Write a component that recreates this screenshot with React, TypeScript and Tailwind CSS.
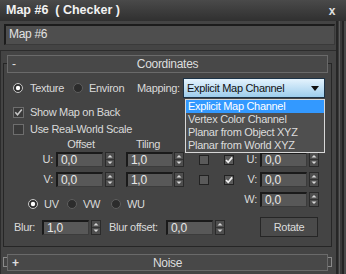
import React from "react";

const Spinner = () => (
  <svg width="10" height="15" viewBox="0 0 10 15" className="block shrink-0">
    <rect x="0.5" y="0.5" width="9" height="14" fill="#4e4e4e" stroke="#2a2a2a" />
    <line x1="1" y1="7.5" x2="9" y2="7.5" stroke="#333333" />
    <path d="M2.5 5.5 L5 3 L7.5 5.5 Z" fill="#d8d8d8" />
    <path d="M2.5 9.5 L5 12 L7.5 9.5 Z" fill="#d8d8d8" />
  </svg>
);

const Field = ({ value, className = "" }: { value: string; className?: string }) => (
  <div
    className={`h-[15px] shrink-0 bg-[#585858] border-t-2 border-l-2 border-r border-b border-t-[#1a1a1a] border-l-[#1a1a1a] border-r-[#3c3c3c] border-b-[#3c3c3c] pl-[3px] text-[12px] leading-[12px] text-[#e8e8e8] ${className}`}
  >
    {value}
  </div>
);

const Radio = ({ on }: { on?: boolean }) => (
  <svg width="10" height="10" viewBox="0 0 10 10" className="block shrink-0">
    <circle cx="5" cy="5" r="4.5" fill="#2c2c2c" stroke={on ? "#c8c8c8" : "#5e5e5e"} />
    {on && <circle cx="5" cy="5" r="2.2" fill="#ffffff" />}
  </svg>
);

const CheckA = ({ on }: { on?: boolean }) => (
  <div className="flex h-[11px] w-[11px] shrink-0 items-center justify-center border border-[#6e6e6e] bg-[#3a3a3a]">
    {on && (
      <svg width="9" height="9" viewBox="0 0 9 9" className="block">
        <path d="M1.3 4.3 L3.5 6.8 L7.8 1.6" stroke="#c8c8c8" strokeWidth="1.5" fill="none" />
      </svg>
    )}
  </div>
);

const CheckB = ({ on }: { on?: boolean }) => (
  <div className="flex h-[10px] w-[10px] shrink-0 items-center justify-center border border-[#222222] bg-[#5a5a5a]">
    {on && (
      <svg width="8" height="8" viewBox="0 0 8 8" className="block">
        <path d="M1 4 L3.2 6.3 L7.2 1.4" stroke="#f0f0f0" strokeWidth="1.7" fill="none" />
      </svg>
    )}
  </div>
);

const Label = ({ children, className = "" }: { children: React.ReactNode; className?: string }) => (
  <span className={`shrink-0 whitespace-nowrap text-[11px] leading-[13px] text-[#dadada] ${className}`}>{children}</span>
);

export default function App() {
  return (
    <div className="flex h-[274px] w-[346px] flex-col overflow-hidden bg-[#444444] font-['Liberation_Sans',Arial,sans-serif] tracking-[-0.3px]">
      {/* title bar */}
      <div className="flex h-[21px] shrink-0 items-center justify-between bg-gradient-to-b from-[#4a4a4a] to-[#303030] pl-[6px] pr-[11px]">
        <span className="whitespace-pre text-[12.5px] font-bold tracking-normal text-[#f2f2f2]">Map #6  ( Checker )</span>
        <span className="text-[12px] font-bold text-[#e0e0e0]">x</span>
      </div>

      <div className="flex flex-1">
        {/* main column */}
        <div className="flex w-[336px] shrink-0 flex-col">
          <div className="ml-[4px] mt-[3px] h-[21px] w-[331px] border-t-2 border-l-2 border-r border-b border-t-[#1c1c1c] border-l-[#1c1c1c] border-r-[#3a3a3a] border-b-[#3a3a3a] bg-[#4e4e4e] pl-[3px] text-[12px] leading-[17px] text-[#e2e2e2]">
            Map #6
          </div>

          {/* panel */}
          <div className="mt-[5px] flex-1 border-t border-l border-[#2c2c2c] pt-[4px]">
            {/* Coordinates rollout */}
            <div className="ml-[2px] w-[329px]">
              <div className="relative z-10 mx-[4px] flex h-[18px] items-center border border-[#6a6a6a] bg-[#484848] text-[12px] text-[#dedede]">
                <span className="ml-[4px] w-[10px]">-</span>
                <span className="flex-1 pr-[14px] text-center">Coordinates</span>
              </div>
              <div className="-mt-[10px] border border-[#262626] pb-[9px] pl-px pt-[14px]">
                {/* row 1 */}
                <div className="flex h-[20px] items-center pl-[8px]">
                  <Radio on />
                  <Label className="ml-[7px] w-[36px]">Texture</Label>
                  <div className="ml-[7px]">
                    <Radio />
                  </div>
                  <Label className="ml-[6px] w-[48px]">Environ</Label>
                  <Label className="w-[46px]">Mapping:</Label>
                  <div className="relative">
                    <div className="flex h-[20px] w-[142px] items-center justify-between border border-[#1d3347] bg-gradient-to-b from-[#e4f3fd] to-[#9dcdec] pl-[3px] pr-[5px]">
                      <span className="text-[11px] text-[#111111]">Explicit Map Channel</span>
                      <svg width="8" height="5" viewBox="0 0 8 5" className="block">
                        <path d="M0 0 L8 0 L4 5 Z" fill="#111111" />
                      </svg>
                    </div>
                    <div className="absolute left-[2px] top-[21px] z-20 w-[140px] border border-[#d8d8d8] bg-[#4f4f4f] text-[11px] leading-[13px] text-[#dcdcdc]">
                      <div className="h-[13px] bg-[#3399ff] pl-[2px] text-white">Explicit Map Channel</div>
                      <div className="h-[13px] pl-[2px]">Vertex Color Channel</div>
                      <div className="h-[13px] pl-[2px]">Planar from Object XYZ</div>
                      <div className="h-[13px] pl-[2px]">Planar from World XYZ</div>
                    </div>
                  </div>
                </div>

                {/* row 2 */}
                <div className="mt-[9px] flex h-[11px] items-center pl-[8px]">
                  <CheckA on />
                  <Label className="ml-[6px]">Show Map on Back</Label>
                </div>
                {/* row 3 */}
                <div className="mt-[6px] flex h-[11px] items-center pl-[8px]">
                  <CheckA />
                  <Label className="ml-[6px]">Use Real-World Scale</Label>
                </div>

                {/* section */}
                <div className="mt-[2px] flex">
                  <div className="flex w-[186px] shrink-0 flex-col">
                    <div className="flex h-[15px] items-center">
                      <Label className="ml-[51px] w-[50px] text-center">Offset</Label>
                      <Label className="ml-[17px] w-[50px] text-center">Tiling</Label>
                    </div>
                    <div className="flex h-[15px] items-center">
                      <Label className="w-[48px] text-right">U:</Label>
                      <Field value="0,0" className="ml-[3px] w-[47px]" />
                      <div className="ml-[2px]"><Spinner /></div>
                      <Field value="1,0" className="ml-[11px] w-[47px]" />
                      <div className="ml-px"><Spinner /></div>
                    </div>
                    <div className="mt-[5px] flex h-[15px] items-center">
                      <Label className="w-[48px] text-right">V:</Label>
                      <Field value="0,0" className="ml-[3px] w-[47px]" />
                      <div className="ml-[2px]"><Spinner /></div>
                      <Field value="1,0" className="ml-[11px] w-[47px]" />
                      <div className="ml-px"><Spinner /></div>
                    </div>
                    <div className="mt-[10px] flex h-[14px] items-center">
                      <div className="ml-[23px]"><Radio on /></div>
                      <Label className="ml-[6px] w-[23px]">UV</Label>
                      <Radio />
                      <Label className="ml-[6px] w-[28px]">VW</Label>
                      <Radio />
                      <Label className="ml-[6px]">WU</Label>
                    </div>
                  </div>
                  <div className="flex flex-col">
                    <div className="h-[15px]" />
                    <div className="flex h-[15px] items-center">
                      <div className="ml-[8px]"><CheckB /></div>
                      <div className="ml-[15px]"><CheckB on /></div>
                      <Label className="w-[23px] text-right">U:</Label>
                      <Field value="0,0" className="ml-[3px] w-[47px]" />
                      <div className="ml-[2px]"><Spinner /></div>
                    </div>
                    <div className="mt-[5px] flex h-[15px] items-center">
                      <div className="ml-[8px]"><CheckB /></div>
                      <div className="ml-[15px]"><CheckB on /></div>
                      <Label className="w-[23px] text-right">V:</Label>
                      <Field value="0,0" className="ml-[3px] w-[47px]" />
                      <div className="ml-[2px]"><Spinner /></div>
                    </div>
                    <div className="mt-[5px] flex h-[15px] items-center">
                      <Label className="ml-[43px] w-[23px] text-right">W:</Label>
                      <Field value="0,0" className="ml-[3px] w-[47px]" />
                      <div className="ml-[2px]"><Spinner /></div>
                    </div>
                  </div>
                </div>

                {/* blur row */}
                <div className="mt-[6px] flex h-[20px] items-center pl-[9px]">
                  <Label className="w-[28px]">Blur:</Label>
                  <Field value="1,0" className="w-[47px]" />
                  <div className="ml-[2px]"><Spinner /></div>
                  <Label className="ml-[8px] w-[57px]">Blur offset:</Label>
                  <Field value="0,0" className="w-[47px]" />
                  <div className="ml-[2px]"><Spinner /></div>
                  <div className="ml-[35px] flex h-[20px] w-[58px] items-center justify-center border border-[#262626] bg-[#4a4a4a] text-[11px] text-[#dcdcdc]">
                    Rotate
                  </div>
                </div>
              </div>
            </div>

            {/* Noise rollout */}
            <div className="ml-[2px] mt-[7px] w-[329px]">
              <div className="relative z-10 mx-[4px] flex h-[17px] items-center border border-[#6a6a6a] bg-[#484848] text-[12px] text-[#dedede]">
                <span className="ml-[4px] w-[10px] font-bold">+</span>
                <span className="flex-1 pr-[14px] text-center">Noise</span>
              </div>
              <div className="-mt-[14px] h-[10px] border border-[#8a8a8a]" />
            </div>
          </div>
        </div>

        {/* scroll strip */}
        <div className="flex w-[10px] shrink-0">
          <div className="w-[2px] bg-[#262626]" />
          <div className="w-px bg-[#3a3a3a]" />
          <div className="w-px bg-[#5c5c5c]" />
          <div className="w-[2px] bg-[#3a3a3a]" />
          <div className="w-[2px] bg-[#242424]" />
          <div className="w-[2px] bg-[#4a4a4a]" />
        </div>
      </div>
    </div>
  );
}
